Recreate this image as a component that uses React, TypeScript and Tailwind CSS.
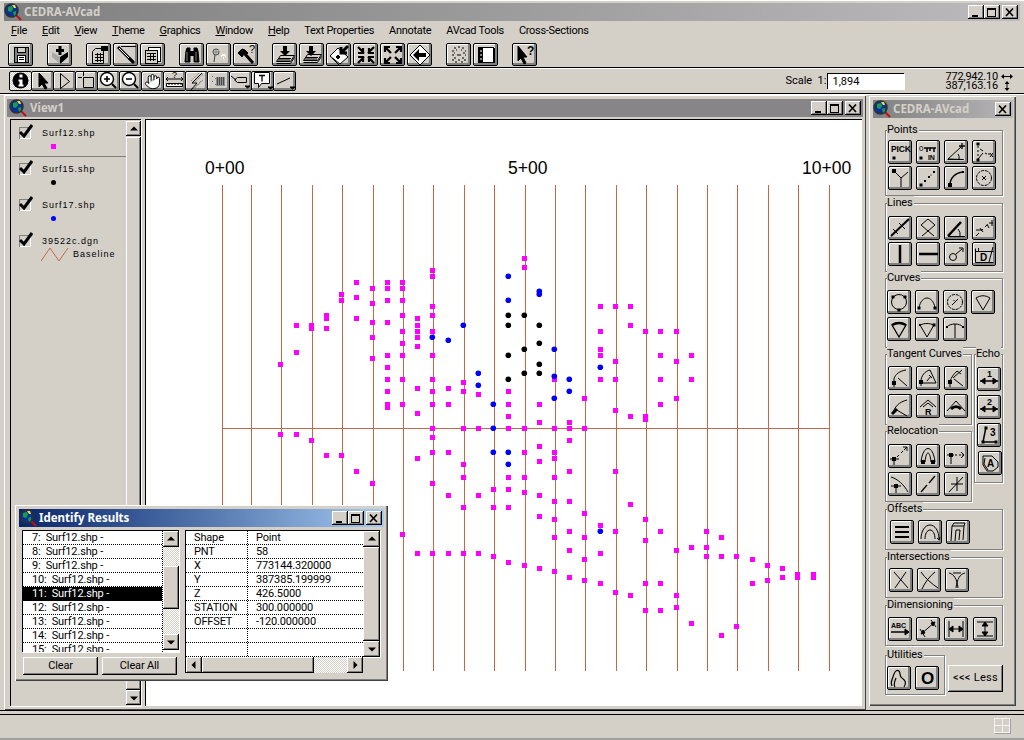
import React from "react";
import { Hand } from "lucide-react";

const sq = (x: number, y: number, s = 3) => <rect key={`${x}-${y}`} x={x - s / 2} y={y - s / 2} width={s} height={s} fill="#000" stroke="none" />;
const T = ({ x, y, s = 7, b = false, children }: any) => (
  <text x={x} y={y} fontSize={s} fontWeight={b ? 700 : 400} fontFamily="Liberation Sans, sans-serif" fill="#000" stroke="none">{children}</text>
);

const icons: Record<string, React.ReactNode> = {
  save: <><rect x="5.5" y="4.5" width="14" height="15" fill="#808080" /><rect x="8.5" y="4.5" width="8" height="5" fill="#d4d0c8" /><rect x="8.5" y="12.5" width="8" height="7" fill="#fff" /><path d="M10 14.5h5M10 16.5h5" /></>,
  add: <><path d="M4 9l8 5 8-5v5l-8 7-8-7z" fill="#a8a8a8" stroke="none" /><path d="M12 14l8-5v5l-8 7z" fill="#000" stroke="none" /><path d="M12 3v9M8 7.500h8" strokeWidth="3" /></>,
  tableflag: <><path d="M5.500 20.500v-12l3-3h8v15z" fill="#d4d0c8" /><path d="M8 11.500h8M8 14.500h8M8 17.500h8M10.500 10v9M13.500 10v9" /><rect x="14" y="3" width="7" height="5" fill="#000" stroke="none" /></>,
  pen: <><path d="M7 3.500h15" /><path d="M4 4l16 16" strokeWidth="3" /><path d="M5 5l10 10" stroke="#fff" /><path d="M15 15l4 4" strokeWidth="3" /></>,
  calc: <><rect x="7.500" y="4.500" width="12" height="14" fill="#fff" /><rect x="4.500" y="7.500" width="12" height="13" fill="#d4d0c8" /><path d="M6 10.500h9M6 13.500h9M6 16.500h9M9.500 10v8M12.500 10v8" /></>,
  binoc: <><path d="M5 19l1-11 1-3h3v14zM14 19V5h3l1 3 1 11z" fill="#000" stroke="#000" /><rect x="10" y="8" width="4" height="5" fill="#000" stroke="none" /><path d="M7 18V9M16 18V9" stroke="#808080" /></>,
  pin: <><circle cx="9" cy="9" r="3" stroke="#404040" /><path d="M8 12l-1 7" stroke="#404040" /><path d="M11 7l1 1M9 6v6M6 9h6" stroke="#808080" /><path d="M14 13h1M16 15h1M18 13h1M15 12h3" stroke="#fff" strokeWidth="2" /></>,
  hammer: <><path d="M4 10l4-4 3 1 3 3-2 2-2-1-2 3z" fill="#000" stroke="#000" /><path d="M11 11l8 9" strokeWidth="3" /><T x={15} y={10} s={11}>?</T></>,
  layDown: <><path d="M3.500 18.500l4-6h14l-4 6zM3.500 20.500h14l4-6" fill="#d4d0c8" /><path d="M5 15.500h13M5 17h12" /><path d="M10 3h4v5h3l-5 5-5-5h3z" fill="#000" stroke="none" /></>,
  layDown2: <><path d="M3.500 17.500l4-6h14l-4 6zM3.500 19.500h14l4-6" fill="#d4d0c8" /><path d="M5 14.500h13M5 16h12" /><path d="M9 3h4v5h3l-5 5-5-5h3z" fill="#000" stroke="none" /></>,
  diaArrow: <><path d="M3 13l8-8 10 9-8 7z" fill="#fff" /><path d="M5 15l8 8" /><path d="M21 3l-6 6M20 10h-6V4" strokeWidth="3" /><path d="M9 14l2-2 2 2-2 2z" fill="#000" /></>,
  shrink: <><path d="M4 4l6 6M9 5v5H4M20 4l-6 6M15 5v5h5M4 20l6-6M9 19v-5H4M20 20l-6-6M15 19v-5h5" strokeWidth="2.200" /></>,
  grow: <><path d="M10 10L4 4M4 9V4h5M14 10l6-6M15 4h5v5M10 14l-6 6M4 15v5h5M14 14l6 6M20 15v5h-5" strokeWidth="2.200" /></>,
  diaLeft: <><path d="M12 2l10 10-10 10L2 12z" fill="#fff" /><path d="M5 12l6-6v4h7v4h-7v4z" fill="#000" stroke="none" /></>,
  dots: <><path d="M7 5h2M11 4h2M15 5h2M5 8h2M9 7h1M14 7h1M18 8h1M7 10h1M16 10h2M5 12h2M10 12h4M18 12h1M7 15h2M15 15h2M5 17h2M11 17h2M17 17h2M8 19h2M14 19h2" stroke="#000" /></>,
  film: <><rect x="4.500" y="4.500" width="15" height="15" fill="#fff" strokeWidth="1" /><rect x="5" y="5" width="4" height="14" fill="#000" stroke="none" /><rect x="19" y="5" width="2" height="15" fill="#000" stroke="none" /><path d="M6 8h2M6 12h2M6 16h2" stroke="#fff" /></>,
  helpCur: <><path d="M5 3v15l3-3 3 6 2-1-3-6h4z" fill="#000" /><T x={14} y={12} s={12} b>?</T></>,
  info: <><circle cx="11.500" cy="11.500" r="8" fill="#000" stroke="none" /><rect x="10.500" y="5.500" width="3" height="3" fill="#fff" stroke="none" /><path d="M9.500 10.500h4v5h1v2h-5v-2h1v-3h-1z" fill="#fff" stroke="none" /></>,
  arrowF: <path d="M8 4v14l3-3 3 5 2-1-3-5h4z" fill="#000" />,
  arrowH: <path d="M7.500 4.500v15l9-7z" fill="#d4d0c8" />,
  dashSel: <><path d="M8.500 8.500h10v10h-10z" /><path d="M3 8.500h4M8.500 3v4" /></>,
  zoomIn: <><circle cx="10" cy="10" r="6.500" strokeWidth="1.400" fill="#fff" /><path d="M7 10h6M10 7v6" strokeWidth="1.600" /><path d="M15 15l4 4" strokeWidth="2" /></>,
  zoomOut: <><circle cx="10" cy="10" r="6.500" strokeWidth="1.400" fill="#fff" /><path d="M7 10h6" strokeWidth="1.600" /><path d="M15 15l4 4" strokeWidth="2" /></>,
  measure: <><T x={9} y={9} s={9}>?</T><path d="M3 10h17M3 10l2-2M3 10l2 2M20 10l-2-2M20 10l-2 2" /><path d="M3.500 14.500h16v3h-16z" fill="#fff" /><path d="M6 14v2M9 14v2M12 14v2M15 14v2M18 14v2" /></>,
  bolt: <><path d="M17 4L7 14h5L6 21" strokeWidth="1" /><path d="M14 4l-8 8M18 5l-9 9M16 12l-8 8M18 11l-9 9" stroke="#707070" strokeDasharray="1 1" /></>,
  dither: <><path d="M5 7l1 1M8 9l1 1M5 12l1 1M8 15l1 1" stroke="#707070" /><rect x="9" y="8" width="9" height="9" fill="#909090" stroke="none" /><path d="M10 9h7M10 11h7M10 13h7M10 15h7" stroke="#000" strokeDasharray="1 1" /></>,
  label: <><path d="M2 7l5 4M8.500 8.500h9v5h-9l-3-2.500z" /><path d="M16 17h5l-2.500 2z" fill="#000" /></>,
  callout: <><path d="M3.500 3.500h15v11h-8l-3 4v-4h-4z" fill="#fff" /><path d="M8 6.500h6M11 6.500v6" strokeWidth="1.300" /><path d="M17 18h5l-2.500 2z" fill="#000" /></>,
  lineD: <><path d="M4 15l13-6" /><path d="M17 18h5l-2.500 2z" fill="#000" /></>,

  pick: <><T x={3} y={12} s={8.500} b>PICK</T>{sq(6, 18)}</>,
  keyin: <><T x={3} y={11} s={8}>0</T><path d="M8 8h12M11 8v4M14 8v3M18 8v4" strokeWidth="1.500" />{sq(5, 18)}<T x={12} y={20} s={7} b>IN</T></>,
  anglePlus: <><path d="M3.500 19.500h16L4 19l13-12M14 14a6 6 0 0 1 1 5" /><path d="M18 3v6M15 6h6" strokeWidth="1.300" /></>,
  offsetPt: <>{sq(6, 4)}{sq(6, 20)}<path d="M6 6v2M6 10v2M6 14v2M8 9l3 2M13 13l2 1M16 14h2" /><path d="M18 13l3 4M21 13l-3 4" /><path d="M6 19l5-6" /></>,
  wye: <>{sq(6, 5, 4)}<path d="M6 5l7 7M20 6l-7 6M13 12v9" /></>,
  dline: <>{sq(5, 19)}{sq(9, 15, 2)}{sq(13, 11, 2)}{sq(18, 6, 2)}{sq(15, 9, 1)}</>,
  curvePt: <>{sq(6, 19, 4)}{sq(19, 6, 2)}<path d="M6 19c0-7 5-12 13-13" strokeWidth="1.500" /></>,
  circX: <><circle cx="12" cy="12" r="7.500" strokeDasharray="3 1" /><path d="M10 10l4 4M14 10l-4 4" /></>,

  thickLine: <><path d="M3 20L21 3" strokeWidth="2" /><path d="M11 7l6 6" /><path d="M5 13l5 5" /></>,
  diamond: <><path d="M6 20l6-5-7-6 7-6 7 6-7 6 6 5" /></>,
  angleThick: <><path d="M4 20L17 6" strokeWidth="2.500" /><path d="M4 20.500h17" strokeWidth="1" /><path d="M14 13a8 8 0 0 1 2 7" /></>,
  dottedTicks: <><path d="M4 20l3-3M9 15l2-2M13 11l2-2M17 7h4M4 14h6M8 12l3 4M15 8l2 4M20 4v6" /></>,
  vbar: <path d="M12 3v18" strokeWidth="2.500" />,
  hbar: <path d="M3 12h19" strokeWidth="2.500" />,
  male: <><circle cx="9" cy="15" r="3.500" /><path d="M12 12l6-5M15 6h4v4" /></>,
  boxD: <><path d="M3.500 6.500v14h18M3.500 9.500h18M6.500 6v4" /><T x={8} y={19} s={10} b>D</T><path d="M17 20l4-15" /></>,

  circSq: <><circle cx="12" cy="12" r="7.500" />{sq(6, 7)}{sq(18, 7)}{sq(12, 20)}</>,
  arc: <><path d="M4 18c1-7 5-10 8-10s7 3 8 10" />{sq(4, 18)}{sq(20, 18)}</>,
  circSlash: <><circle cx="12" cy="12" r="7.500" strokeDasharray="3 1" /><path d="M9 15l6-6M11 10v1" /></>,
  fan: <><path d="M12 20L5 8c5-3 9-3 14 0z" /></>,
  fanB: <><path d="M12 20L5 8c5-3 9-3 14 0z" strokeWidth="1.300" /><path d="M5 8c5-3 9-3 14 0" strokeWidth="2.500" /></>,
  fanD: <><path d="M12 20L5 8c5-2 9-2 14 0z" />{sq(19, 8)}{sq(5, 8, 2)}</>,
  tArc: <><path d="M4 10c3-4 13-4 16 0" />{sq(4, 10, 2)}{sq(20, 10, 2)}<path d="M12 7v14" /></>,

  tan1: <>{sq(6, 17, 4)}<path d="M6 21V13c1-5 6-8 12-9M10 12l9 8" /></>,
  tan2: <>{sq(5, 16, 4)}<path d="M5 20v-5c0-5 4-10 9-11l6 13H5M13 9l3 3M11 15l4-5" /></>,
  tan3: <>{sq(6, 16, 4)}<path d="M6 21v-5c1-5 4-8 7-11M9 12l9-8M10 13l9 7M13 5l4 3" /></>,
  tan4: <><path d="M5 20c1-7 6-12 14-14" strokeWidth="1" /><path d="M4 20l5-5" strokeWidth="3" /><path d="M7 15l12 7" /></>,
  tanR: <><path d="M4 13l8-7 8 7M7 13l5-4 5 4" /><T x={9} y={21} s={9} b>R</T></>,
  tan6: <><path d="M3 17L12 7l9 10" /><path d="M7 15c3-3 7-3 10 0" strokeWidth="3" /></>,
  echo1: <><T x={10} y={10} s={9} b>1</T><path d="M3 14h18" strokeWidth="1.300" /><path d="M8 11l-4 3 4 3zM16 11l4 3-4 3z" fill="#000" /></>,
  echo2: <><T x={10} y={10} s={9} b>2</T><path d="M3 14h18" strokeWidth="1.300" /><path d="M8 11l-4 3 4 3zM16 11l4 3-4 3z" fill="#000" /></>,
  echo3: <><path d="M9 4l-3 15h13" strokeWidth="1.500" />{sq(9, 5)}{sq(6, 19)}{sq(19, 19)}<T x={13} y={13} s={10} b>3</T></>,
  echoA: <><path d="M5 5h9l6 6v5l-5 4H9l-4-6z" strokeWidth="1" /><path d="M7 7l-1 6 4 6" /><T x={9} y={16} s={10} b>A</T></>,
  rel1: <>{sq(6, 15, 4)}<path d="M2 15h9M6 15v6M9 13l2-2M13 9l2-2M16 6l3-3M19 3v4M19 3h-4" /></>,
  rel2: <>{sq(7, 18, 4)}{sq(17, 18, 4)}<path d="M5 18c2-18 12-18 14 0M9 18c1-12 5-12 6 0" /></>,
  rel3: <>{sq(7, 11, 4)}<path d="M3 11h7M7 11v9M11 11h2M15 11h2M20 11h-2M20 11l-3-3M20 11l-3 3" /></>,
  rel4: <>{sq(8, 14, 4)}<path d="M3 5c7 2 13 8 17 15M3 14h10M8 14v7" /></>,
  rel5: <><path d="M5 20l6-7M13 11l6-7" strokeWidth="1.300" /></>,
  rel6: <><path d="M5 20L19 5" /><path d="M7 12h12M13 5v14" strokeWidth="1" /></>,
  off1: <path d="M5 7h14M5 12h14M5 17h14" strokeWidth="2" />,
  off2: <><path d="M3 19c0-8 4-14 9-14s9 6 9 14" /><path d="M7 19c0-5 2-9 5-9s5 4 5 9" /><path d="M19 18l2 2 1-3" /></>,
  off3: <><path d="M5 21l1-15h12l-1 14M9 21l1-11h4l-1 10M6 6l2-3h11l-1 3" /></>,
  int1: <path d="M5 4l14 16M17 4L6 20" />,
  int2: <path d="M4 4c4 6 11 12 17 16M18 4C13 8 8 14 5 21" />,
  int3: <><path d="M4 5c5 1 8 6 9 15M20 5c-5 1-8 6-9 15" /><path d="M8 5h8" /></>,
  dimAbc: <><T x={3} y={11} s={7} b>ABC</T><path d="M3 15h16" strokeWidth="1.300" /><path d="M17 12l4 3-4 3z" fill="#000" /></>,
  dimDiag: <><path d="M5 17l14-12M4 12l5 8M15 3l5 7" /><path d="M5 17l4-1-2-3zM19 5l-4 1 2 3z" fill="#000" /></>,
  dimH: <><path d="M5 4v16M19 4v16M5 12h14" strokeWidth="1" /><path d="M9 9l-4 3 4 3zM15 9l4 3-4 3z" fill="#000" /></>,
  dimV: <><path d="M4 5h16M4 19h16M12 5v14" /><path d="M9 9l3-4 3 4zM9 15l3 4 3-4z" fill="#000" /></>,
  squig: <><path d="M5 20c-2-4 0-6 1-9 1-4 3-8 6-6 2 2 0 6 3 7 3 2 5 5 2 9M8 21c-2-3 0-6 1-9" strokeWidth="1.200" /></>,
  oBig: <T x={6} y={18} s={17} b>O</T>,
};

function Ico({ n }: { n: string }) {
  return (
    <svg width="24" height="24" viewBox="0 0 24 24" fill="none" stroke="#000" strokeWidth="1" className="shrink-0">
      {icons[n]}
    </svg>
  );
}

function TBtn({ n, pressed, small }: { n: string; pressed?: boolean; small?: boolean }) {
  return (
    <div className={`${small ? "w-[23px] h-[20px] -mr-px" : "w-[25px] h-[23px]"} flex items-center justify-center overflow-hidden rounded-[2px] border border-black ${pressed ? "bg-[repeating-conic-gradient(#d4d0c8_0_25%,#ffffff_0_50%)] bg-[length:2px_2px]" : "bg-[#d4d0c8] shadow-[inset_-2px_-2px_0_#808080,inset_1px_1px_0_#ffffff]"}`}>
      {n === "hand" ? <Hand size={17} strokeWidth={1.4} fill="#fff" color="#000" /> : <Ico n={n} />}
    </div>
  );
}

function PBtn({ n }: { n: string }) {
  return (
    <div className="w-[24px] h-[24px] flex items-center justify-center overflow-hidden rounded-[2px] border border-black bg-[#d4d0c8] shadow-[inset_-2px_-2px_0_#808080,inset_1px_1px_0_#ffffff]">
      <Ico n={n} />
    </div>
  );
}

function Group({ title, className, children }: { title: string; className: string; children: React.ReactNode }) {
  return (
    <div className={`relative border border-[#808080] shadow-[1px_1px_0_#ffffff,inset_1px_1px_0_#ffffff] ${className}`}>
      <span className="absolute -top-[8px] left-[1px] bg-[#d4d0c8] pr-[1px] text-[11px] leading-[13px]">{title}</span>
      {children}
    </div>
  );
}

function WinCtl({ c }: { c: "min" | "max" | "close" }) {
  return (
    <div className="w-[16px] h-[14px] bg-[#d4d0c8] shadow-[inset_-1px_-1px_0_#000000,inset_1px_1px_0_#ffffff,inset_-2px_-2px_0_#808080] flex items-center justify-center">
      <svg width="10" height="9" viewBox="0 0 10 9" stroke="#000" fill="none" shapeRendering="crispEdges">
        {c === "min" && <path d="M1 7.500h6" strokeWidth="2" />}
        {c === "max" && <path d="M0.500 1.500h8M0.500 0.500h8v8h-8z" />}
        {c === "close" && <path d="M1 0.500l7 7.500M8 0.500L1 8" strokeWidth="1.600" shapeRendering="auto" />}
      </svg>
    </div>
  );
}

function Globe() {
  return (
    <svg width="18" height="18" viewBox="0 0 18 18" className="shrink-0">
      <path d="M12 12l5 5" stroke="#c01010" strokeWidth="2" />
      <circle cx="7.500" cy="7.500" r="6.500" fill="#0b2f9c" stroke="#303030" strokeWidth="1.500" />
      <path d="M4 4l4-1 1 3-2 3-3-1zM9 9l3-1 0 3-2 2z" fill="#18a040" />
      <path d="M8 2h3l1 3-2 0z" fill="#e8e060" />
    </svg>
  );
}

const Tri = ({ d }: { d: "u" | "d" | "l" | "r" }) => (
  <svg width="8" height="8" viewBox="0 0 8 8" fill="#000" className="shrink-0">
    {d === "u" && <path d="M4 1.500l4 4H0z" />}
    {d === "d" && <path d="M4 6.500l4-4H0z" />}
    {d === "l" && <path d="M1.500 4l4-4v8z" />}
    {d === "r" && <path d="M6.500 4l-4-4v8z" />}
  </svg>
);

const scBtn = "bg-[#d4d0c8] shadow-[inset_-1px_-1px_0_#000000,inset_1px_1px_0_#ffffff,inset_-2px_-2px_0_#808080] flex items-center justify-center";
const dither = "bg-[repeating-conic-gradient(#d4d0c8_0_25%,#ffffff_0_50%)] bg-[length:2px_2px]";

const mag: number[][] = [
  [432,270],[432,276],[356,282],[387,282],[402,282],[372,288],[387,288],[402,288],[341,294],[341,300],[356,297],[387,300],[402,300],[372,303],[432,306],[326,315],[326,318],[402,315],[432,315],[417,318],[356,318],[372,322],[387,322],[296,325],[311,325],[311,328],[326,328],[417,325],[402,331],[417,331],[432,331],[372,337],[417,337],[402,343],[417,346],[296,352],[280,364],[387,355],[402,355],[432,355],[372,358],[387,367],[387,379],[402,379],[432,379],[463,382],[417,388],[448,388],[387,391],[432,391],[463,391],[478,394],[387,404],[387,407],[402,404],[432,404],[448,404],[417,413],[432,428],[463,428],[478,428],
  [524,258],[524,267],[600,306],[615,306],[630,306],[630,325],[600,331],[645,331],[660,331],[676,331],[600,349],[600,355],[660,355],[691,355],[615,361],[676,361],[554,379],[600,379],[615,379],[660,379],[691,379],[508,391],[584,398],[676,398],[508,404],[539,404],[660,404],[615,410],[508,416],[630,416],[645,416],[645,419],[539,422],[569,422],[508,428],[524,428],[554,428],[569,428],[584,428],
  [432,437],[569,440],[539,446],[432,452],[448,452],[524,452],[554,452],[417,458],[554,458],[539,461],[463,464],[569,471],[615,471],[463,477],[508,477],[524,477],[554,477],[432,483],[493,489],[508,489],[524,492],[448,495],[478,495],[539,495],[554,501],[569,501],[463,507],[493,507],[508,507],[584,513],[539,516],[554,519],[600,525],[569,531],[615,531],[402,534],[554,537],[584,537],[569,550],[417,553],[432,553],[448,553],[463,553],[478,553],[600,553],[493,556],[584,559],[508,562],[524,565],[539,568],[554,571],[569,577],[584,580],[600,583],[615,592],
  [630,504],[645,519],[660,531],[706,531],[721,537],[645,540],[676,550],[691,547],[706,547],[706,556],[721,556],[736,556],[752,559],[767,565],[782,568],[797,574],[797,577],[813,574],[813,577],[782,577],[767,580],[752,583],[645,583],[660,583],[630,595],[676,595],[676,607],[645,610],[660,610],[691,623],[736,626],[721,635],
  [280,434],[296,434],[311,440],[326,455],[341,455],[356,471],[372,483],
];
const blue: number[][] = [[463,325],[432,337],[448,340],[478,373],[478,385],[508,276],[539,291],[539,294],[508,300],[554,349],[600,367],[554,376],[569,379],[569,391],[554,398],[493,404],[493,428],[493,452],[508,452],[508,464],[600,531]];
const black: number[][] = [[508,315],[524,315],[508,325],[539,325],[539,343],[524,349],[508,355],[539,364],[524,373],[539,373],[508,379]];
const vx = [222,251,281,312,342,373,403,433,464,494,525,555,585,616,646,677,707,737,768,798,829];

function Chart() {
  return (
    <svg width="716" height="586" viewBox="146 120 716 586" className="block">
      <g shapeRendering="crispEdges" stroke="#c4684a" strokeWidth="1">
        {vx.map((x) => <line key={x} x1={x + 0.5} x2={x + 0.5} y1={185} y2={671} />)}
        <line x1={222} x2={830} y1={428.5} y2={428.5} />
      </g>
      <g shapeRendering="crispEdges" fill="#ff00ff">
        {mag.map(([x, y], i) => <rect key={i} x={Math.round(x - 2.5)} y={Math.round(y - 2.5)} width={5} height={5} />)}
      </g>
      {blue.map(([x, y], i) => <circle key={i} cx={x + 0.3} cy={y + 0.3} r={2.8} fill="#0000ff" />)}
      {black.map(([x, y], i) => <circle key={i} cx={x + 0.3} cy={y + 0.3} r={2.8} fill="#000" />)}
      <g fontFamily="Liberation Sans, sans-serif" fontSize="17.500" fill="#000">
        <text x={205} y={174}>0+00</text>
        <text x={508} y={174}>5+00</text>
        <text x={802} y={174}>10+00</text>
      </g>
    </svg>
  );
}

function Legend() {
  const Check = () => (
    <div className="w-[12px] h-[12px] relative bg-[#d4d0c8] shadow-[inset_1px_1px_0_#808080,inset_-1px_-1px_0_#ffffff]">
      <svg width="16" height="14" viewBox="0 0 16 14" className="absolute -top-[3px] left-0">
        <path d="M1 8l4 4 8-11" fill="none" stroke="#000" strokeWidth="3" />
      </svg>
    </div>
  );
  const row = (name: string, sym: React.ReactNode, sel?: boolean, extra?: React.ReactNode) => (
    <div className={`h-[36px] flex pl-[7px] pt-[6px] gap-[11px] ${sel ? "border-b border-[#808080]" : ""}`}>
      <Check />
      <div className="flex flex-col">
        <span className="text-[9px] leading-[12px] tracking-[1px] [font-family:'Liberation_Sans',sans-serif]">{name}</span>
        {extra ?? <div className="mt-[5px] ml-[9px]">{sym}</div>}
      </div>
    </div>
  );
  return (
    <div className="w-[131px] flex border-l border-t border-black shadow-[1px_1px_0_#ffffff] pl-[1px] pt-[1px]">
      <div className="w-[114px] bg-[#d4d0c8] shrink-0">
        {row("Surf12.shp", <div className="w-[5px] h-[5px] bg-[#ff00ff]" />, true)}
        {row("Surf15.shp", <div className="w-[5px] h-[5px] rounded-full bg-black" />)}
        {row("Surf17.shp", <div className="w-[5px] h-[5px] rounded-full bg-[#0000ff]" />)}
        {row("39522c.dgn", null, false,
          <div className="flex items-center gap-[4px] -ml-[1px]">
            <svg width="28" height="15" viewBox="0 0 28 15"><path d="M0 14L9 1l9 13 9-13" fill="none" stroke="#c4684a" /></svg>
            <span className="text-[9px] tracking-[1px] [font-family:'Liberation_Sans',sans-serif]">Baseline</span>
          </div>)}
      </div>
      <div className="w-[15px] flex flex-col">
        <div className={`h-[15px] ${scBtn}`}><Tri d="u" /></div>
        <div className={`flex-1 mt-[1px] ${scBtn}`} />
        <div className={`h-[15px] mb-[1px] ${scBtn}`}><Tri d="d" /></div>
      </div>
    </div>
  );
}

function Palette() {
  return (
    <div className="w-[147px] h-[610px] mt-[1px] shadow-[inset_1px_1px_0_#ffffff,inset_-1px_-1px_0_#404040,inset_-2px_-2px_0_#808080] pt-[4px] pl-[4px]">
      <div className="w-[140px] h-[18px] flex items-center bg-linear-to-r from-[#808080] to-[#b8b6b8] pr-[2px]">
        <Globe />
        <span className="ml-[2px] flex-1 font-bold text-[11.5px] text-[#d4d0c8] [font-family:'Noto_Sans',sans-serif]">CEDRA-AVcad</span>
        <WinCtl c="close" />
      </div>
      <div className="ml-[12px] mt-[12px] w-[118px] flex flex-col tracking-[-0.1px]">
        <Group title="Points" className="h-[66px] pl-[2px] pt-[9px] flex flex-col gap-[2px]">
          <div className="flex gap-[4px]">{["pick", "keyin", "anglePlus", "offsetPt"].map((n) => <PBtn key={n} n={n} />)}</div>
          <div className="flex gap-[4px]">{["wye", "dline", "curvePt", "circX"].map((n) => <PBtn key={n} n={n} />)}</div>
        </Group>
        <Group title="Lines" className="mt-[7px] h-[69px] pl-[2px] pt-[12px] flex flex-col gap-[2px]">
          <div className="flex gap-[4px]">{["thickLine", "diamond", "angleThick", "dottedTicks"].map((n) => <PBtn key={n} n={n} />)}</div>
          <div className="flex gap-[4px]">{["vbar", "hbar", "male", "boxD"].map((n) => <PBtn key={n} n={n} />)}</div>
        </Group>
        <Group title="Curves" className="mt-[6px] h-[70px] pl-[1px] pt-[11px] flex flex-col gap-[3px]">
          <div className="flex gap-[4px]">{["circSq", "arc", "circSlash", "fan"].map((n) => <PBtn key={n} n={n} />)}</div>
          <div className="flex gap-[4px]">{["fanB", "fanD", "tArc"].map((n) => <PBtn key={n} n={n} />)}</div>
        </Group>
        <div className="mt-[6px] flex gap-[2px]">
          <div className="w-[87px] flex flex-col">
            <Group title="Tangent Curves" className="h-[71px] pl-[2px] pt-[11px] flex flex-col gap-[4px]">
              <div className="flex gap-[4px]">{["tan1", "tan2", "tan3"].map((n) => <PBtn key={n} n={n} />)}</div>
              <div className="flex gap-[4px]">{["tan4", "tanR", "tan6"].map((n) => <PBtn key={n} n={n} />)}</div>
            </Group>
            <Group title="Relocation" className="mt-[6px] h-[71px] pl-[2px] pt-[12px] flex flex-col gap-[4px]">
              <div className="flex gap-[4px]">{["rel1", "rel2", "rel3"].map((n) => <PBtn key={n} n={n} />)}</div>
              <div className="flex gap-[4px]">{["rel4", "rel5", "rel6"].map((n) => <PBtn key={n} n={n} />)}</div>
            </Group>
          </div>
          <Group title="Echo" className="w-[29px] h-[129px] pl-[2px] pt-[12px] flex flex-col gap-[4px]">
            <PBtn n="echo1" />
            <PBtn n="echo2" />
            <PBtn n="echo3" />
            <div className="ml-[1px]"><PBtn n="echoA" /></div>
          </Group>
        </div>
        <Group title="Offsets" className="mt-[7px] h-[41px] pl-[4px] pt-[10px] flex gap-[4px]">
          {["off1", "off2", "off3"].map((n) => <PBtn key={n} n={n} />)}
        </Group>
        <Group title="Intersections" className="mt-[7px] h-[41px] pl-[3px] pt-[10px] flex gap-[4px]">
          {["int1", "int2", "int3"].map((n) => <PBtn key={n} n={n} />)}
        </Group>
        <Group title="Dimensioning" className="mt-[7px] h-[41px] pl-[2px] pt-[11px] flex">
          <PBtn n="dimAbc" /><div className="ml-[4px]"><PBtn n="dimDiag" /></div><div className="ml-[4px]"><PBtn n="dimH" /></div><div className="ml-[5px]"><PBtn n="dimV" /></div>
        </Group>
        <div className="mt-[9px] flex items-start">
          <Group title="Utilities" className="w-[60px] h-[40px] pl-[1px] pt-[10px] flex gap-[4px]">
            <PBtn n="squig" /><PBtn n="oBig" />
          </Group>
          <div className="ml-[3px] mt-[10px] w-[55px] h-[27px] bg-[#d4d0c8] shadow-[inset_-1px_-1px_0_#000000,inset_1px_1px_0_#ffffff,inset_-2px_-2px_0_#808080] flex items-center justify-center text-[11px] tracking-[0.3px]">&lt;&lt;&lt; Less</div>
        </div>
      </div>
    </div>
  );
}

function IdentifyWin() {
  const list = ["7", "8", "9", "10", "11", "12", "13", "14", "15"];
  const rows = [["Shape", "Point"], ["PNT", "58"], ["X", "773144.320000"], ["Y", "387385.199999"], ["Z", "426.5000"], ["STATION", "300.000000"], ["OFFSET", "-120.000000"], ["", ""], ["", ""]];
  const sunken = "border-l border-t border-black shadow-[1px_1px_0_#ffffff]";
  return (
    <div className="absolute left-[15px] top-[505px] w-[373px] h-[176px] bg-[#d4d0c8] shadow-[inset_1px_1px_0_#ffffff,inset_-1px_-1px_0_#404040,inset_-2px_-2px_0_#808080] p-[4px]">
      <div className="h-[18px] flex items-center bg-linear-to-r from-[#0a246a] to-[#a6caf0] pr-[2px]">
        <Globe />
        <span className="ml-[2px] flex-1 font-bold text-[11.5px] text-white [font-family:'Noto_Sans',sans-serif]">Identify Results</span>
        <div className="flex"><WinCtl c="min" /><WinCtl c="max" /><div className="ml-[2px]"><WinCtl c="close" /></div></div>
      </div>
      <div className="flex mt-[3px] pl-[3px] gap-[6px] text-[11px] tracking-[-0.15px]">
        <div className="w-[157px] shrink-0">
          <div className={`h-[122px] flex bg-white overflow-hidden ${sunken}`}>
            <div className="w-[140px] shrink-0 border-r border-dotted border-black">
              {list.map((n) => (
                <div key={n} className={`h-[14px] leading-[14px] pl-[9px] border-b border-dotted border-black whitespace-pre ${n === "11" ? "bg-black text-white" : ""}`}>
                  {`${n}:  Surf12.shp -`}
                </div>
              ))}
            </div>
            <div className="w-[16px] flex flex-col">
              <div className={`h-[16px] ${scBtn}`}><Tri d="u" /></div>
              <div className={`h-[19px] ${dither}`} />
              <div className={`h-[43px] ${scBtn}`} />
              <div className={`h-[25px] ${dither}`} />
              <div className={`h-[16px] ${scBtn}`}><Tri d="d" /></div>
            </div>
          </div>
          <div className="mt-[5px] ml-[1px] flex gap-[4px]">
            <div className={`w-[75px] h-[18px] ${scBtn}`}>Clear</div>
            <div className={`w-[75px] h-[18px] ${scBtn}`}>Clear All</div>
          </div>
        </div>
        <div className="w-[195px] shrink-0">
          <div className={`flex h-[127px] bg-white ${sunken}`}>
            <div className="w-[177px] shrink-0">
              {rows.map((r, i) => (
                <div key={i} className="h-[14px] flex leading-[14px] border-b border-dotted border-black">
                  <div className="w-[62px] pl-[8px] border-r border-dotted border-black">{r[0]}</div>
                  <div className="pl-[8px]">{r[1]}</div>
                </div>
              ))}
            </div>
            <div className="w-[17px] flex flex-col bg-[#d4d0c8] self-start h-[126px]">
              <div className={`h-[16px] ${scBtn}`}><Tri d="u" /></div>
              <div className={`h-[94px] ${scBtn}`} />
              <div className={`h-[16px] ${scBtn}`}><Tri d="d" /></div>
            </div>
          </div>
          <div className="w-[178px] h-[16px] flex border-l border-black">
            <div className={`w-[16px] ${scBtn}`}><Tri d="l" /></div>
            <div className={`w-[112px] ${scBtn}`} />
            <div className={`w-[33px] ${dither}`} />
            <div className={`w-[16px] ${scBtn}`}><Tri d="r" /></div>
          </div>
        </div>
      </div>
    </div>
  );
}

export default function App() {
  const groups = [["save"], ["add"], ["tableflag", "pen", "calc"], ["binoc", "pin", "hammer"], ["layDown", "layDown2", "diaArrow", "shrink", "grow", "diaLeft"], ["dots", "film"], ["helpCur"]];
  const tools = ["info", "arrowF", "arrowH", "dashSel", "zoomIn", "zoomOut", "hand", "measure", "bolt", "dither", "label", "callout", "lineD"];
  const menus: [string, string][] = [["F", "ile"], ["E", "dit"], ["V", "iew"], ["T", "heme"], ["G", "raphics"], ["W", "indow"], ["H", "elp"], ["", "Text Properties"], ["", "Annotate"], ["", "AVcad Tools"], ["", "Cross-Sections"]];
  return (
    <div className="relative w-[1024px] h-[740px] overflow-hidden bg-[#d4d0c8] flex flex-col px-[4px] pt-[3px] text-[11px] text-black [font-family:Roboto,sans-serif] shadow-[inset_0_1px_0_#ffffff,inset_0_-2px_0_#a0a0a0]">
      <div className="h-[18px] shrink-0 flex items-center bg-linear-to-r from-[#808080] to-[#bcbabc] pr-[2px]">
        <Globe />
        <span className="ml-[2px] flex-1 font-bold text-[11.5px] text-[#d4d0c8] [font-family:'Noto_Sans',sans-serif]">CEDRA-AVcad</span>
        <div className="flex"><WinCtl c="min" /><WinCtl c="max" /><div className="ml-[2px]"><WinCtl c="close" /></div></div>
      </div>
      <div className="h-[21px] shrink-0 flex items-center pl-[7px] gap-[15px] text-[11px] tracking-[-0.3px]">
        {menus.map(([u, r]) => <span key={r}>{u && <u>{u}</u>}{r}</span>)}
      </div>
      <div className="h-[26px] shrink-0 flex items-start pt-[1px] gap-[14px] -mx-[4px] px-[8px] border-b border-b-black shadow-[0_1px_0_#ffffff]">
        {groups.map((g, i) => <div key={i} className="flex gap-[2px]">{g.map((n) => <TBtn key={n} n={n} />)}</div>)}
      </div>
      <div className="h-[25px] shrink-0 flex items-center -mx-[4px] pl-[9px] pr-[11px] mt-[1px] border-b border-b-black shadow-[0_1px_0_#ffffff]">
        <div className="flex">{tools.map((n, i) => <TBtn key={n} n={n} small pressed={i === 0} />)}</div>
        <span className="ml-auto mr-[1px] text-[11px]">Scale&nbsp; 1:</span>
        <div className="w-[77px] h-[16px] bg-white border-l border-t border-black shadow-[1px_1px_0_#ffffff] leading-[15px] pl-[4px] text-[11px]">1,894</div>
        <div className="ml-[41px] flex flex-col items-end leading-[9.5px] text-[11px] tracking-[-0.2px]"><span>772,942.10</span><span>387,163.16</span></div>
        <svg width="12" height="20" viewBox="0 0 12 20" className="ml-[3px]" fill="#000">
          <path d="M2 5.500h8" stroke="#000" /><path d="M0 5.500l3-2.500v5zM12 5.500l-3-2.500v5z" />
          <path d="M6 12v6" stroke="#000" /><path d="M6 10l-2.500 3h5zM6 20l-2.500-3h5z" />
        </svg>
      </div>
      <div className="h-[615px] shrink-0 flex items-start gap-[3px] mt-[1px]">
        <div className="w-[862px] h-[615px] shadow-[inset_1px_1px_0_#ffffff,inset_-1px_-1px_0_#404040] pt-[4px] px-[3px] flex flex-col">
          <div className="h-[18px] shrink-0 flex items-center bg-[#878587] pl-[2px] pr-[2px]">
            <Globe />
            <span className="ml-[3px] flex-1 font-bold text-[11.5px] text-[#d4d0c8] [font-family:'Noto_Sans',sans-serif]">View1</span>
            <div className="flex"><WinCtl c="min" /><WinCtl c="max" /><div className="ml-[2px]"><WinCtl c="close" /></div></div>
          </div>
          <div className="flex mt-[2px] pl-[3px] gap-[4px] h-[587px]">
            <Legend />
            <div className="border-l border-t border-black bg-white overflow-hidden">
              <Chart />
            </div>
          </div>
        </div>
        <Palette />
      </div>
      <div className="h-[27px] shrink-0 -mx-[4px] border-t border-black pt-[3px] flex flex-col">
        <div className="flex-1 border-t border-black flex items-center justify-end pr-[13px]">
          <svg width="17" height="16" viewBox="0 0 17 16" fill="none" stroke="#f4f4f4" shapeRendering="crispEdges"><path d="M.5.5h15v14H.5zM8 0v15M0 7.500h16" /><path d="M1 15.500h16M16.500 1v15" stroke="#a0a0a0" /></svg>
        </div>
      </div>
      <IdentifyWin />
    </div>
  );
}
